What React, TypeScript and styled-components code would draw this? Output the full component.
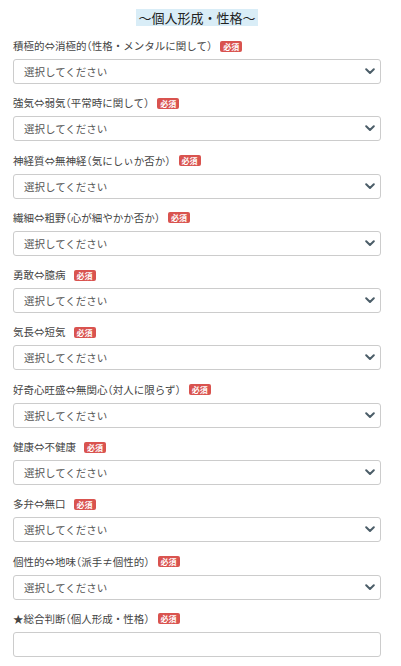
import React from "react";
import styled, { createGlobalStyle } from "styled-components";

const Global = createGlobalStyle`
  html, body { margin: 0; padding: 0; background: #fff; }
  body { font-family: "Noto Sans CJK JP", "Noto Sans", sans-serif; color: #333; }
  * { box-sizing: border-box; }
`;

const Page = styled.div`
  width: 401px;
  padding: 9px 20px 0 13px;
`;

const TitleRow = styled.div`
  display: flex;
  justify-content: center;
  margin-bottom: 12px;
`;

const Title = styled.span`
  display: inline-block;
  background: #d9edf7;
  color: #222;
  font-size: 13px;
  line-height: 17px;
  height: 17px;
  padding: 0 2px;
`;

const Group = styled.div`
  margin-bottom: 11.3px;
`;

const Label = styled.div`
  display: flex;
  align-items: center;
  font-size: 10.5px;
  line-height: 16px;
  height: 16px;
  color: #444;
  margin-bottom: 5px;
  white-space: nowrap;
`;

const Paren = styled.span`
  font-feature-settings: "halt";
`;

const Badge = styled.span`
  display: inline-block;
  margin-left: 8px;
  background: #d9534f;
  color: #fff;
  font-size: 8px;
  font-weight: bold;
  line-height: 11px;
  height: 11px;
  padding: 0 3px;
  border-radius: 2px;
`;

const SelectBox = styled.div`
  display: flex;
  align-items: center;
  justify-content: space-between;
  height: 25px;
  border: 1px solid #ccc;
  border-radius: 3px;
  padding: 0 4px 0 10px;
  font-size: 10.5px;
  color: #555;
  background: #fff;
`;

const InputBox = styled.div`
  height: 25px;
  border: 1px solid #ccc;
  border-radius: 3px;
  background: #fff;
`;

const Chevron = () => (
  <svg width="10" height="7" viewBox="0 0 10 7" style={{ marginRight: 1 }}>
    <path d="M1.2 1.3 L5 5 L8.8 1.3" fill="none" stroke="#4b5d68" strokeWidth="2" strokeLinecap="round" strokeLinejoin="round" />
  </svg>
);

const renderLabel = (t: string) =>
  t.split(/([（）])/).map((part, i) =>
    part === "（" || part === "）" ? <Paren key={i}>{part}</Paren> : <React.Fragment key={i}>{part}</React.Fragment>
  );

const items = [
  "積極的⇔消極的（性格・メンタルに関して）",
  "強気⇔弱気（平常時に関して）",
  "神経質⇔無神経（気にしぃか否か）",
  "繊細⇔粗野（心が細やかか否か）",
  "勇敢⇔臆病",
  "気長⇔短気",
  "好奇心旺盛⇔無関心（対人に限らず）",
  "健康⇔不健康",
  "多弁⇔無口",
  "個性的⇔地味（派手≠個性的）",
];

export default function App() {
  return (
    <Page>
      <Global />
      <TitleRow>
        <Title>～個人形成・性格～</Title>
      </TitleRow>
      {items.map((t) => (
        <Group key={t}>
          <Label>
            {renderLabel(t)}
            <Badge>必須</Badge>
          </Label>
          <SelectBox>
            <span>選択してください</span>
            <Chevron />
          </SelectBox>
        </Group>
      ))}
      <Group>
        <Label>
          {renderLabel("★総合判断（個人形成・性格）")}
          <Badge>必須</Badge>
        </Label>
        <InputBox />
      </Group>
    </Page>
  );
}
